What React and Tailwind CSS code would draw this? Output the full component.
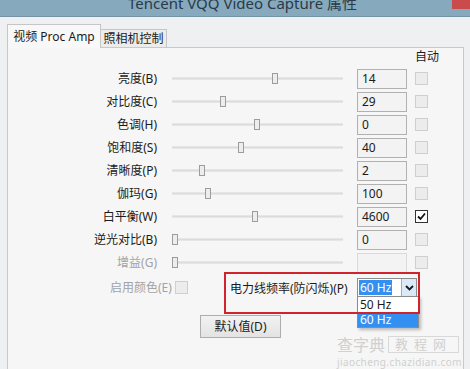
import React from 'react';

const rows = [
  { label: '亮度(B)', pos: 100, value: '14' },
  { label: '对比度(C)', pos: 48, value: '29' },
  { label: '色调(H)', pos: 82, value: '0' },
  { label: '饱和度(S)', pos: 66, value: '40' },
  { label: '清晰度(P)', pos: 27, value: '2' },
  { label: '伽玛(G)', pos: 33, value: '100' },
  { label: '白平衡(W)', pos: 80, value: '4600', checked: true },
  { label: '逆光对比(B)', pos: 0, value: '0' },
  { label: '增益(G)', pos: 0, value: '', disabled: true },
];

function Slider({ pos }) {
  return (
    <div className="ml-[15px] w-[171px] h-[11px] flex items-center">
      <div className="w-full h-[3px] bg-[#dcdcdc] border-y border-[#e6e6e6] flex items-center">
        <div style={{ marginLeft: pos }} className="w-[6px] h-[11px] shrink-0 bg-[#ededed] border border-[#9c9c9c]" />
      </div>
    </div>
  );
}

function Check({ checked, className = '' }) {
  if (checked) {
    return (
      <div className={`w-[13px] h-[13px] border border-[#333] bg-white flex items-center justify-center ${className}`}>
        <svg width="9" height="9" viewBox="0 0 9 9">
          <path d="M1 4.5 L3.5 7 L8 1.5" fill="none" stroke="#111" strokeWidth="1.8" />
        </svg>
      </div>
    );
  }
  return <div className={`w-[13px] h-[13px] border border-[#cfcfcf] bg-[#ececec] ${className}`} />;
}

export default function App() {
  return (
    <div className="w-[470px] h-[369px] overflow-hidden bg-[#eff0f2] text-[12px] text-[#1b1b1b] font-['Noto_Sans','Noto_Sans_CJK_SC',sans-serif] relative">
      {/* title bar */}
      <div className="h-[17px] bg-[#86a9be] border-b border-[#7593a6] flex items-start overflow-hidden">
        <div className="pl-[128px] text-[15px] leading-none -mt-[4px] text-[#2b3a46]">Tencent VQQ Video Capture 属性</div>
        <div className="ml-auto w-[18px] h-[9px] bg-[#c94b4b]" />
      </div>

      <div className="pl-[7px] pt-[8px]">
        {/* tabs */}
        <div className="flex items-end h-[22px]">
          <div className="relative z-10 -mb-px h-[24px] w-[94px] bg-[#f8f8f8] border border-b-0 border-[#c6c6c6] flex items-center justify-center leading-none">
            视频 Proc Amp
          </div>
          <div className="h-[18px] w-[66px] bg-[#ececec] border border-b-0 border-l-0 border-[#c6c6c6] flex items-center justify-center leading-none">
            照相机控制
          </div>
        </div>

        {/* panel */}
        <div className="w-[457px] h-[340px] bg-[#f6f6f6] border border-[#c9c9c9]">
          <div className="h-[18px] pl-[407px] flex items-center leading-none">自动</div>

          <div className="mt-px">
            {rows.map((r) => (
              <div key={r.label} className="h-[23px] flex items-center">
                <div className={`w-[149px] text-right leading-none ${r.disabled ? 'text-[#a3a3a3]' : ''}`}>{r.label}</div>
                <Slider pos={r.pos} />
                <div className={`ml-[14px] w-[50px] h-[20px] border ${r.disabled ? 'border-[#dadada]' : 'border-[#b1b1b1]'} bg-[#f3f3f3] pl-[4px] flex items-center leading-none`}>
                  {r.value}
                </div>
                <Check checked={r.checked} className="ml-[8px]" />
              </div>
            ))}
          </div>

          {/* power line frequency */}
          <div className="flex items-start -mt-[2px]">
            <div className="w-[216px] h-[31px] pl-[102px] flex items-center gap-[3px] text-[#a3a3a3] leading-none">
              启用颜色(E)
              <Check />
            </div>
            <div className="relative w-[196px] h-[42px] pt-[6px] pl-[6px] pr-[3px] flex items-start">
              <div className="h-[19px] flex items-center leading-none pt-[2px]">电力线频率(防闪烁)(P)</div>
              <div className="relative ml-auto w-[60px] h-[19px] border border-[#8c8c8c] bg-white flex items-center">
                <div className="ml-[1px] px-[1px] h-[15px] bg-[#3390f0] text-white flex items-center leading-none">60 Hz</div>
                <div className="ml-auto w-[15px] h-full bg-[#dbeaf8] border-l border-[#86b6e6] flex items-center justify-center">
                  <svg width="9" height="6" viewBox="0 0 9 6">
                    <path d="M1 1 L4.5 4.5 L8 1" fill="none" stroke="#1a1a1a" strokeWidth="1.8" />
                  </svg>
                </div>
                <div className="absolute z-10 top-full -left-px w-[62px] border border-[#8c8c8c] bg-white shadow-[2px_2px_3px_rgba(0,0,0,0.25)]">
                  <div className="h-[15px] pl-[2px] flex items-center leading-none">50 Hz</div>
                  <div className="h-[15px] pl-[2px] bg-[#3390f0] text-white flex items-center leading-none">60 Hz</div>
                </div>
              </div>
              <div className="absolute inset-0 z-20 border-2 border-[#d0232b] pointer-events-none" />
            </div>
          </div>

          <div className="mt-[1px] ml-[192px] w-[81px] h-[23px] border border-[#adadad] bg-gradient-to-b from-[#f2f2f2] to-[#e3e3e3] flex items-center justify-center leading-none">
            默认值(D)
          </div>
        </div>
      </div>

      {/* watermark */}
      <div className="absolute left-[337px] top-[336px] text-[#d0d0d0] leading-none">
        <div className="flex items-center gap-[3px]">
          <span className="text-[16px]">查字典</span>
          <span className="border border-[#d8d8d8] px-[6px] py-[1px] text-[13px] tracking-[6px]">教程网</span>
        </div>
        <div className="text-[10px] mt-[4px] tracking-[0.4px]">jiaocheng.chazidian.com</div>
      </div>
    </div>
  );
}
